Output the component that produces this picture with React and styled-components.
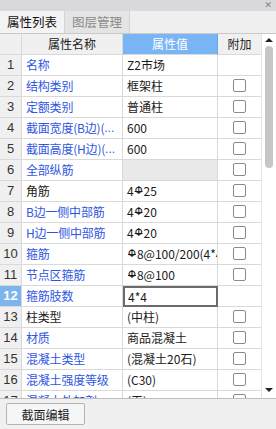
import React from 'react'
import styled, { createGlobalStyle, css } from 'styled-components'

const GlobalStyle = createGlobalStyle`
    html, body {
        margin: 0;
        padding: 0;
        background: #f0f0f0;
    }
    body {
        font-family: 'Noto Sans CJK SC', 'Noto Sans', sans-serif;
        font-size: 12px;
        color: #1a1a1a;
    }
`

const COLS = '22px 101px 95px 44px'

const Panel = styled.div`
    width: 276px;
    height: 429px;
    display: flex;
    flex-direction: column;
    background: #f0f0f0;
    overflow: hidden;
`

const TitleBar = styled.div`
    height: 11px;
    background: #d8d8dd;
    display: flex;
    justify-content: flex-end;
    align-items: center;
    padding-right: 4px;
`

const Close = styled.span`
    font-family: 'DejaVu Sans', sans-serif;
    font-size: 9px;
    font-weight: bold;
    line-height: 11px;
    color: #808080;
`

const Tabs = styled.div`
    height: 22px;
    display: flex;
    background: #efefef;
    border-bottom: 1px solid #c9c9c9;
`

const Tab = styled.div`
    width: 64px;
    display: flex;
    align-items: center;
    justify-content: center;
    font-size: 12.5px;
    border-right: 1px solid #d4d4d4;
    color: ${(props) => (props.active ? '#111' : '#8a8a8a')};
    background: ${(props) => (props.active ? '#f3f3f3' : '#e4e4e4')};
`

const Table = styled.div`
    height: 365px;
    display: flex;
    background: #fff;
    border-bottom: 1px solid #bdbdbd;
    overflow: hidden;
`

const Grid = styled.div`
    width: 262px;
    display: flex;
    flex-direction: column;
    overflow: hidden;
`

const Row = styled.div`
    display: grid;
    grid-template-columns: ${COLS};
    height: 21px;
    flex-shrink: 0;
`

const Cell = styled.div`
    box-sizing: border-box;
    height: 21px;
    border-right: 1px solid #d9d9d9;
    border-bottom: 1px solid #d9d9d9;
    display: flex;
    align-items: center;
    padding: 0 4px;
    white-space: nowrap;
    overflow: hidden;
`

const HeadCell = styled(Cell)`
    justify-content: center;
    background: ${(props) => (props.accent ? '#79b4f4' : '#f0f0f0')};
    color: ${(props) => (props.accent ? '#fff' : '#222')};
    border-right-color: ${(props) => (props.accent ? '#6aa6e8' : '#d9d9d9')};
`

const NumCell = styled(Cell)`
    justify-content: center;
    padding: 0;
    font-family: 'Liberation Sans', sans-serif;
    font-size: 13px;
    background: ${(props) => (props.selected ? '#7cb5ee' : '#f0f0f0')};
    color: ${(props) => (props.selected ? '#fff' : '#333')};
    font-weight: ${(props) => (props.selected ? 'bold' : 'normal')};
`

const NameCell = styled(Cell)`
    padding-right: 0;
    letter-spacing: -0.2px;
    color: ${(props) => (props.plain ? '#1a1a1a' : '#2f56e2')};
`

const Dots = styled.span`
    font-family: 'Liberation Sans', sans-serif;
    letter-spacing: 0;
`

const ValueCell = styled(Cell)`
    background: ${(props) => (props.disabled ? '#e9e9e9' : '#fff')};
    ${(props) =>
        props.editing &&
        css`
            border: 2px solid #6b6b6b;
            padding-left: 3px;
        `}
`

const Rebar = styled.span`
    font-family: 'DejaVu Sans', sans-serif;
    font-size: 10px;
    text-decoration: line-through;
    margin: 0 1px;
`

const ExtraCell = styled(Cell)`
    justify-content: center;
    padding: 0;
`

const Check = styled.span`
    width: 13px;
    height: 13px;
    box-sizing: border-box;
    border: 1px solid #8a8a8a;
    border-radius: 2px;
    background: #fff;
`

const ScrollBar = styled.div`
    width: 14px;
    display: flex;
    flex-direction: column;
    align-items: center;
    background: #fff;
    border-left: 1px solid #e4e4e4;
`

const Arrow = styled.span`
    width: 0;
    height: 0;
    border-left: 4px solid transparent;
    border-right: 4px solid transparent;
    ${(props) =>
        props.down
            ? css`
                  border-top: 4px solid #222;
                  margin-top: auto;
                  margin-bottom: 6px;
              `
            : css`
                  border-bottom: 4px solid #222;
                  margin-top: 4px;
              `}
`

const Thumb = styled.div`
    width: 8px;
    height: 122px;
    margin-top: 4px;
    border-radius: 4px;
    background: #c6c6c6;
`

const Footer = styled.div`
    flex: 1;
    padding: 4px 6px;
`

const Button = styled.button`
    width: 79px;
    height: 22px;
    font-family: 'Noto Sans CJK SC', sans-serif;
    font-size: 12px;
    color: #1a1a1a;
    background: #f6f6f6;
    border: 1px solid #b4b4b4;
    border-radius: 2px;
    padding: 0;
`

const R = '\u03A6'

const rows = [
    { name: '名称', value: 'Z2市场', noCheck: true },
    { name: '结构类别', value: '框架柱' },
    { name: '定额类别', value: '普通柱' },
    { name: '截面宽度(B边)(', cut: true, value: '600' },
    { name: '截面高度(H边)(', cut: true, value: '600' },
    { name: '全部纵筋', value: '', disabled: true },
    { name: '角筋', value: ['4', R, '25'], plain: true },
    { name: 'B边一侧中部筋', value: ['4', R, '20'] },
    { name: 'H边一侧中部筋', value: ['4', R, '20'] },
    { name: '箍筋', value: ['', R, '8@100/200(4*4)'] },
    { name: '节点区箍筋', value: ['', R, '8@100'] },
    { name: '箍筋肢数', value: '4*4', selected: true, noCheck: true },
    { name: '柱类型', value: '(中柱)', plain: true },
    { name: '材质', value: '商品混凝土' },
    { name: '混凝土类型', value: '(混凝土20石)' },
    { name: '混凝土强度等级', value: '(C30)' },
    { name: '混凝土外加剂', value: '(无)' },
]

const renderValue = (value) => {
    if (!Array.isArray(value)) return value
    return (
        <>
            {value[0]}
            <Rebar>{value[1]}</Rebar>
            {value[2]}
        </>
    )
}

const App = () => {
    return (
        <>
            <GlobalStyle />
            <Panel>
                <TitleBar>
                    <Close>✕</Close>
                </TitleBar>
                <Tabs>
                    <Tab active>属性列表</Tab>
                    <Tab>图层管理</Tab>
                </Tabs>
                <Table>
                    <Grid>
                        <Row>
                            <HeadCell />
                            <HeadCell>属性名称</HeadCell>
                            <HeadCell accent>属性值</HeadCell>
                            <HeadCell>附加</HeadCell>
                        </Row>
                        {rows.map((row, i) => (
                            <Row key={i}>
                                <NumCell selected={row.selected}>{i + 1}</NumCell>
                                <NameCell plain={row.plain}>
                                    {row.name}
                                    {row.cut && <Dots>...</Dots>}
                                </NameCell>
                                <ValueCell
                                    disabled={row.disabled}
                                    editing={row.selected}
                                >
                                    {renderValue(row.value)}
                                </ValueCell>
                                <ExtraCell>{!row.noCheck && <Check />}</ExtraCell>
                            </Row>
                        ))}
                    </Grid>
                    <ScrollBar>
                        <Arrow />
                        <Thumb />
                        <Arrow down />
                    </ScrollBar>
                </Table>
                <Footer>
                    <Button>截面编辑</Button>
                </Footer>
            </Panel>
        </>
    )
}

export default App
